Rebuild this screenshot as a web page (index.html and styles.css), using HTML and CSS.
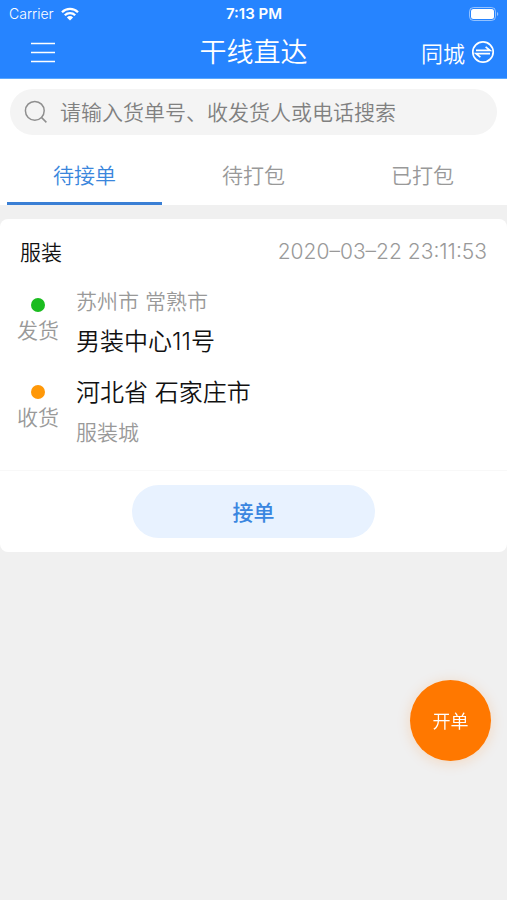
FILE: index.html
```
<!DOCTYPE html>
<html lang="zh-CN">
<head>
    <meta charset="UTF-8">
    <meta name="viewport" content="width=device-width, initial-scale=1.0">
    <title>干线直达</title>
    <link rel="stylesheet" href="styles.css">
</head>
<body>
    <header class="header">
        <div class="status-bar">
            <div class="status-left">
                <span>Carrier</span>
                <svg class="wifi" viewBox="0 0 18 14" aria-hidden="true">
                    <path d="M1 5.2a11.4 11.4 0 0 1 16 0M3.8 8.2a7.4 7.4 0 0 1 10.4 0" fill="none" stroke="#fff" stroke-width="2.3"/>
                    <path d="M5.9 10.4a4.4 4.4 0 0 1 6.2 0L9 13.6z" fill="#fff"/>
                </svg>
            </div>
            <div class="status-time">7:13 PM</div>
            <div class="status-right">
                <svg class="battery" viewBox="0 0 30 14" aria-hidden="true">
                    <rect x="0.5" y="0.5" width="26" height="13" rx="4" fill="none" stroke="#fff" stroke-opacity="0.5"/>
                    <rect x="2" y="2" width="23" height="10" rx="2.5" fill="#fff"/>
                    <path d="M28 5a2.2 2.2 0 0 1 0 4z" fill="#fff" fill-opacity="0.5"/>
                </svg>
            </div>
        </div>
        <div class="nav-bar">
            <button class="menu-button" type="button" aria-label="菜单">
                <svg class="menu-icon" viewBox="0 0 26 22" aria-hidden="true">
                    <path d="M1 1.5h24M1 10.5h24M1 19.5h24" fill="none" stroke="#fff" stroke-width="1.4"/>
                </svg>
            </button>
            <h1 class="title">干线直达</h1>
            <button class="city-button" type="button">
                同城
                <svg class="swap-icon" viewBox="0 0 24 24" fill="none" stroke="#fff" stroke-width="1.7" aria-hidden="true">
                    <circle cx="12" cy="12" r="10.2"/>
                    <path d="M5 10.4h14l-4.4-3.6M19 13.6H5l4.4 3.6"/>
                </svg>
            </button>
        </div>
    </header>

    <div class="top-panel">
        <label class="search">
            <svg class="search-icon" viewBox="0 0 24 24" fill="none" stroke="#8f8f8f" stroke-width="1.5" aria-hidden="true">
                <circle cx="10.8" cy="10.8" r="9.4"/>
                <path d="M17.4 17.4l5 5"/>
            </svg>
            <input class="search-input" type="text" placeholder="请输入货单号、收发货人或电话搜索" aria-label="搜索">
        </label>
        <nav class="tabs">
            <button class="tab active" type="button">待接单</button>
            <button class="tab" type="button">待打包</button>
            <button class="tab" type="button">已打包</button>
        </nav>
    </div>

    <main class="list">
        <article class="card">
            <div class="card-head">
                <h2 class="goods">服装</h2>
                <time class="date">2020–03–22 23:11:53</time>
            </div>
            <div class="route">
                <div class="marks">
                    <div class="mark">
                        <span class="dot dot-send"></span>
                        <span>发货</span>
                    </div>
                    <div class="mark">
                        <span class="dot dot-receive"></span>
                        <span>收货</span>
                    </div>
                </div>
                <div class="stops">
                    <div class="stop">
                        <p class="minor">苏州市 常熟市</p>
                        <p class="major">男装中心11号</p>
                    </div>
                    <div class="stop">
                        <p class="major">河北省 石家庄市</p>
                        <p class="minor">服装城</p>
                    </div>
                </div>
            </div>
            <div class="card-foot">
                <button class="accept-button" type="button">接单</button>
            </div>
        </article>
    </main>

    <button class="create-button" type="button">开单</button>
</body>
</html>
```

FILE: styles.css
```
* {
    box-sizing: border-box;
}
body {
    margin: 0;
    min-height: 100vh;
    background-color: #f0f0f0;
    color: #111;
    font-family: Inter, "Noto Sans CJK SC", sans-serif;
    font-size: 21px;
    font-weight: 350;
}
h1, h2, p {
    margin: 0;
    font-weight: inherit;
}
button, input {
    font-family: inherit;
    font-weight: inherit;
    border: none;
    background: none;
    padding: 0;
}
button {
    cursor: pointer;
    padding-bottom: 2px;
}
svg {
    display: block;
    flex: none;
}

/* header */
.header {
    background-color: #2684ff;
    color: #fff;
    border-bottom: 1px solid #5aa8ff;
}
.status-bar {
    display: flex;
    align-items: center;
    height: 27px;
    padding: 0 8px 0 9px;
    font-size: 14px;
}
.status-left, .status-right {
    flex: 1;
    display: flex;
    align-items: center;
    gap: 7px;
}
.status-right {
    justify-content: flex-end;
}
.status-time {
    font-size: 15px;
    font-weight: 600;
}
.wifi {
    width: 18px;
    height: 14px;
}
.battery {
    width: 30px;
    height: 14px;
}
.nav-bar {
    display: grid;
    grid-template-columns: 1fr auto 1fr;
    align-items: center;
    height: 51px;
    padding: 0 12px;
}
.menu-button {
    justify-self: start;
    padding: 0 18px;
}
.menu-icon {
    width: 26px;
    height: 22px;
}
.title {
    font-size: 27px;
    line-height: 40px;
}
.city-button {
    justify-self: end;
    display: flex;
    align-items: center;
    gap: 6px;
    color: #fff;
    font-size: 22px;
}
.swap-icon {
    width: 24px;
    height: 24px;
}

/* search and tabs */
.top-panel {
    background-color: #fff;
    padding-top: 10px;
}
.search {
    display: flex;
    align-items: center;
    gap: 12px;
    height: 46px;
    margin: 0 10px;
    padding: 0 14px;
    border-radius: 23px;
    background-color: #f4f4f4;
}
.search-icon {
    width: 24px;
    height: 24px;
}
.search-input {
    flex: 1;
    min-width: 0;
    height: 32px;
    font-size: 21px;
    outline: none;
}
.search-input::placeholder {
    color: #808080;
    opacity: 1;
}
.tabs {
    display: flex;
    margin-top: 10px;
}
.tab {
    flex: 1;
    height: 60px;
    margin: 0 7px;
    border-top: 3px solid transparent;
    border-bottom: 3px solid transparent;
    color: #999;
    font-size: 21px;
}
.tab.active {
    color: #3a86dc;
    border-bottom-color: #3a7fd5;
}

/* order card */
.list {
    padding-top: 14px;
}
.card {
    background-color: #fff;
    border-radius: 8px;
}
.card-head {
    display: flex;
    align-items: center;
    justify-content: space-between;
    height: 64px;
    padding: 0 20px;
}
.goods {
    font-size: 21px;
}
.date {
    color: #999;
    font-size: 21px;
}
.route {
    display: flex;
    gap: 17px;
    padding: 4px 17px 22px;
    border-bottom: 1px solid #f8f8f8;
}
.marks {
    display: flex;
    flex-direction: column;
    gap: 41px;
    padding-top: 11px;
    color: #999;
    font-size: 21px;
    line-height: 26px;
}
.mark {
    display: flex;
    flex-direction: column;
    align-items: center;
    gap: 6px;
}
.dot {
    width: 14px;
    height: 14px;
    border-radius: 50%;
}
.dot-send {
    background-color: #1abc1f;
}
.dot-receive {
    background-color: #ff9808;
}
.stops {
    display: flex;
    flex-direction: column;
    gap: 21px;
}
.stop {
    display: flex;
    flex-direction: column;
    gap: 10px;
    line-height: 30px;
}
.minor {
    color: #999;
    font-size: 21px;
}
.major {
    font-size: 24px;
}
.card-foot {
    display: flex;
    justify-content: center;
    padding: 14px 0;
}
.accept-button {
    width: 48%;
    height: 53px;
    border-radius: 27px;
    background-color: #e8f2ff;
    color: #3a86e0;
    font-size: 21px;
    font-weight: 500;
}

/* floating button */
.create-button {
    position: fixed;
    right: 16px;
    bottom: 139px;
    width: 81px;
    height: 81px;
    border-radius: 50%;
    background-color: #ff7800;
    color: #fff;
    font-size: 18px;
    box-shadow: 0 2px 14px rgba(255, 120, 0, 0.2);
}
```
